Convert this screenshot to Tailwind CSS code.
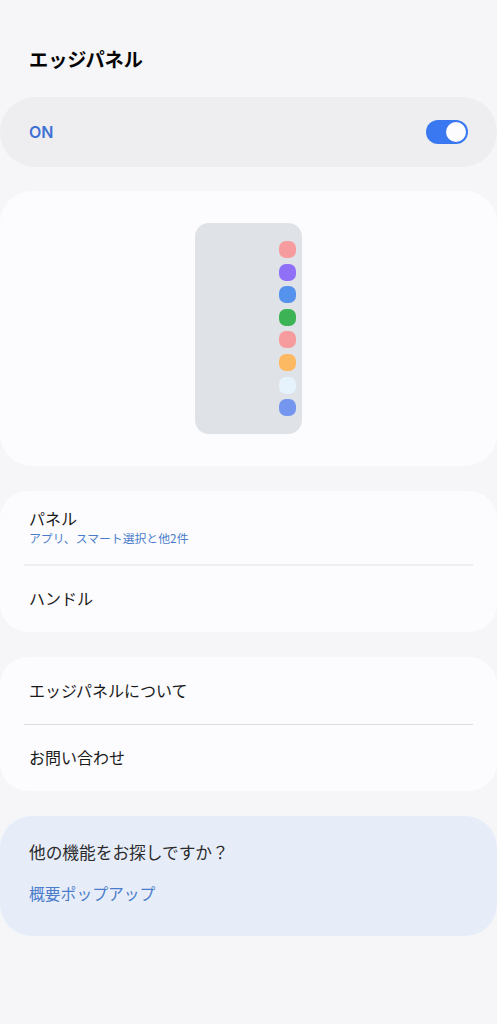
<!DOCTYPE html>
<html lang="ja">
<head>
  <meta charset="UTF-8" />
  <meta name="viewport" content="width=device-width, initial-scale=1.0"/>
  <title>エッジパネル</title>
  <script src="https://cdn.jsdelivr.net/npm/@tailwindcss/browser@4"></script>
</head>
<body class="bg-[#f6f6f8] h-[1024px] overflow-hidden font-['Noto_Sans_CJK_JP','Noto_Sans',sans-serif]">

  <!-- Header -->
  <h1 class="h-[97px] pl-[29px] pt-[45px] text-[19.2px] leading-[28px] font-bold text-[#050505]">エッジパネル</h1>

  <!-- Master switch -->
  <div class="h-[70px] rounded-[35px] bg-[#eeeef0] flex items-center justify-between pl-[29px] pr-[29px]">
    <span class="font-['Inter',sans-serif] text-[16px] font-semibold text-[#3e71d4]">ON</span>
    <div class="w-[42px] h-[24px] rounded-full bg-[#3a78f2] flex items-center justify-end pr-[2px]">
      <div class="w-[20px] h-[20px] rounded-full bg-[#fcfcfe]"></div>
    </div>
  </div>

  <!-- Preview -->
  <div class="mt-[24px] h-[275px] rounded-[32px] bg-[#fcfcfe] flex justify-center pt-[32px]">
    <div class="w-[107px] h-[211px] rounded-[14px] bg-[#dfe2e6] flex flex-col items-end gap-[5.6px] pt-[18px] pr-[6px]">
      <div class="w-[17px] h-[17px] rounded-[7px] bg-[#f79c9e]"></div>
      <div class="w-[17px] h-[17px] rounded-[7px] bg-[#9170f8]"></div>
      <div class="w-[17px] h-[17px] rounded-[7px] bg-[#5492ee]"></div>
      <div class="w-[17px] h-[17px] rounded-[7px] bg-[#3cb354]"></div>
      <div class="w-[17px] h-[17px] rounded-[7px] bg-[#f79c9e]"></div>
      <div class="w-[17px] h-[17px] rounded-[7px] bg-[#fdb862]"></div>
      <div class="w-[17px] h-[17px] rounded-[7px] bg-[#e6f3fc]"></div>
      <div class="w-[17px] h-[17px] rounded-[7px] bg-[#7596ef]"></div>
    </div>
  </div>

  <!-- Panel / handle -->
  <div class="mt-[25px] h-[141px] rounded-[28px] bg-[#fcfcfe] flex flex-col">
    <div class="h-[73px] pl-[29px] pt-[16px]">
      <div class="text-[16px] leading-[23px] text-[#1a1a1a]">パネル</div>
      <div class="text-[11.85px] leading-[15px] text-[#4a7ccb]">アプリ、スマート選択と他2件</div>
    </div>
    <div class="mx-[24px] h-[2px] bg-[#eeeef0]"></div>
    <div class="flex-1 pl-[29px] flex items-center text-[16px] text-[#1a1a1a] pb-[2px]">ハンドル</div>
  </div>

  <!-- About -->
  <div class="mt-[25px] h-[134px] rounded-[28px] bg-[#fcfcfe] flex flex-col">
    <div class="h-[67px] pl-[29px] flex items-center text-[16px] text-[#1a1a1a] pb-[2px]">エッジパネルについて</div>
    <div class="mx-[24px] h-px bg-[#dcdcde]"></div>
    <div class="flex-1 pl-[29px] flex items-center text-[16px] text-[#1a1a1a] pb-[2px]">お問い合わせ</div>
  </div>

  <!-- Suggestions -->
  <div class="mt-[25px] h-[120px] rounded-[32px] bg-[#e7edf8] pl-[29px] pt-[24px]">
    <div class="text-[16.7px] leading-[24px] text-[#2c2c2e]">他の機能をお探しですか？</div>
    <div class="mt-[18px] text-[15.8px] leading-[24px] text-[#4a7ccb]">概要ポップアップ</div>
  </div>

</body>
</html>
